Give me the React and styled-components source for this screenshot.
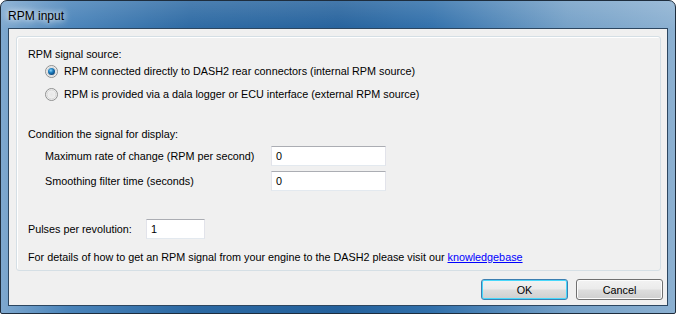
import React from "react";
import styled, { createGlobalStyle } from "styled-components";

const GlobalStyle = createGlobalStyle`
  html, body {
    margin: 0;
    padding: 0;
    background: #ffffff;
  }
  body {
    font-family: "Liberation Sans", Arial, sans-serif;
    font-size: 10.8px;
    color: #000;
  }
`;

const Window = styled.div`
  width: 676px;
  height: 314px;
  box-sizing: border-box;
  display: flex;
  flex-direction: column;
  padding: 0 7px 7px 7px;
  border: 1px solid #1e2d3d;
  border-radius: 7px 7px 2px 2px;
  background:
    linear-gradient(180deg, rgba(255, 255, 255, 0.15) 0%, rgba(255, 255, 255, 0) 30px),
    linear-gradient(90deg, #7ea8cf 0%, #4a84ba 10%, #2c69a3 28%, #24619c 50%, #3170ab 64%, #74a0c7 84%, #8bb0d1 100%);
`;

const TitleBar = styled.div`
  height: 27px;
  display: flex;
  align-items: center;
  padding-top: 2px;
  box-sizing: border-box;
`;

const Title = styled.span`
  font-size: 12px;
  color: #000;
  text-shadow: 0 0 6px #ffffff, 0 0 8px rgba(255, 255, 255, 0.8);
`;

const Client = styled.div`
  flex: 1;
  display: flex;
  flex-direction: column;
  border: 1px solid #2c4660;
  background: #f0f0f0;
  padding: 7px 4px 5px 7px;
`;

const Panel = styled.div`
  display: flex;
  flex-direction: column;
  margin-right: 2px;
  border: 1px solid #d5dfe5;
  border-radius: 3px;
  box-shadow: inset 1px 1px 0 #ffffff;
  padding: 10px 11px 6px 11px;
`;

const Heading = styled.div`
  height: 14px;
  line-height: 14px;
  margin-top: ${(p) => p.$top || 0}px;
`;

const RadioList = styled.div`
  display: flex;
  flex-direction: column;
  gap: 9px;
  margin-top: 3px;
  padding-left: 17px;
`;

const RadioRow = styled.label`
  display: flex;
  align-items: center;
  height: 14px;
  gap: 6px;
`;

const FieldList = styled.div`
  display: flex;
  flex-direction: column;
  gap: 5px;
  margin-top: 5px;
  padding-left: 17px;
`;

const FieldRow = styled.div`
  display: flex;
  align-items: center;
  height: 20px;
  margin-top: ${(p) => p.$top || 0}px;
`;

const FieldLabel = styled.span`
  width: ${(p) => p.$w}px;
  flex-shrink: 0;
  white-space: nowrap;
`;

const TextBox = styled.div`
  box-sizing: border-box;
  width: ${(p) => p.$w}px;
  height: 20px;
  background: #ffffff;
  border: 1px solid #e2e3ea;
  border-top-color: #abadb3;
  border-bottom-color: #e3e9ef;
  padding-left: 4px;
  line-height: 18px;
`;

const Footer = styled.div`
  height: 14px;
  line-height: 14px;
  margin-top: 11px;
`;

const Link = styled.a`
  color: #0000ff;
  text-decoration: underline;
`;

const ButtonRow = styled.div`
  display: flex;
  justify-content: flex-end;
  gap: 8px;
  margin-top: 8px;
`;

const Button = styled.button`
  box-sizing: border-box;
  width: 87px;
  height: 21px;
  font-family: "Liberation Sans", Arial, sans-serif;
  font-size: 10.8px;
  color: #000;
  border-radius: 3px;
  border: 1px solid ${(p) => (p.$primary ? "#3c7fb1" : "#707070")};
  box-shadow: inset 0 0 0 1px ${(p) => (p.$primary ? "#48d8fb" : "#fcfcfc")};
  background: linear-gradient(180deg, #f2f2f2 0%, #ebebeb 48%, #dddddd 52%, #cfcfcf 100%);
  padding: 0;
`;

const Radio = ({ checked }) => (
  <svg width="13" height="13" viewBox="0 0 13 13">
    <defs>
      <radialGradient id="rbg" cx="50%" cy="50%" r="60%">
        <stop offset="0%" stopColor="#e6e6e6" />
        <stop offset="100%" stopColor="#f8f8f8" />
      </radialGradient>
      <radialGradient id="rdot" cx="40%" cy="35%" r="70%">
        <stop offset="0%" stopColor="#8ed5fb" />
        <stop offset="45%" stopColor="#1d7fc0" />
        <stop offset="100%" stopColor="#0a3e73" />
      </radialGradient>
    </defs>
    <circle cx="6.5" cy="6.5" r="6" fill="url(#rbg)" stroke="#8e8f8f" strokeWidth="1" />
    <circle cx="6.5" cy="6.5" r="4.5" fill="none" stroke="#d6d6d6" strokeWidth="1" />
    {checked && <circle cx="6.5" cy="6.5" r="3.5" fill="url(#rdot)" />}
  </svg>
);

export default function App() {
  return (
    <>
      <GlobalStyle />
      <Window>
        <TitleBar>
          <Title>RPM input</Title>
        </TitleBar>
        <Client>
          <Panel>
            <Heading>RPM signal source:</Heading>
            <RadioList>
              <RadioRow>
                <Radio checked />
                RPM connected directly to DASH2 rear connectors (internal RPM source)
              </RadioRow>
              <RadioRow>
                <Radio />
                RPM is provided via a dala logger or ECU interface (external RPM source)
              </RadioRow>
            </RadioList>
            <Heading $top={26}>Condition the signal for display:</Heading>
            <FieldList>
              <FieldRow>
                <FieldLabel $w={226}>Maximum rate of change (RPM per second)</FieldLabel>
                <TextBox $w={115}>0</TextBox>
              </FieldRow>
              <FieldRow>
                <FieldLabel $w={226}>Smoothing filter time (seconds)</FieldLabel>
                <TextBox $w={115}>0</TextBox>
              </FieldRow>
            </FieldList>
            <FieldRow $top={28}>
              <FieldLabel $w={118}>Pulses per revolution:</FieldLabel>
              <TextBox $w={59}>1</TextBox>
            </FieldRow>
            <Footer>
              For details of how to get an RPM signal from your engine to the DASH2 please visit our{" "}
              <Link href="#">knowledgebase</Link>
            </Footer>
          </Panel>
          <ButtonRow>
            <Button $primary>OK</Button>
            <Button>Cancel</Button>
          </ButtonRow>
        </Client>
      </Window>
    </>
  );
}
